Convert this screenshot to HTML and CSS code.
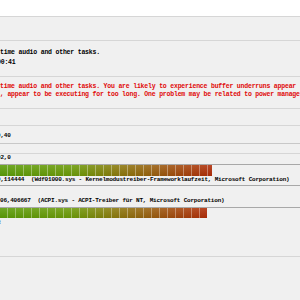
FILE: index.html
```html
<!DOCTYPE html>
<html>
<head>
<meta charset="utf-8">
<link rel="stylesheet" href="styles.css">
</head>
<body>
<div class="page">
  <div class="top"></div>
  <div class="band"></div>
  <div class="info">
    <div class="txt">time audio and other tasks.</div>
    <div class="txt shift">00:41</div>
  </div>
  <div class="warn">
    <div class="red">time audio and other tasks. You are likely to experience buffer underruns appear</div>
    <div class="red">, appear to be executing for too long. One problem may be related to power manage</div>
  </div>
  <div class="gap"></div>
  <div class="row r1"><span class="val">9,40</span></div>
  <div class="row r2"></div>
  <div class="row r3"><span class="val">92,0</span></div>
  <div class="bar b1"></div>
  <div class="row r4"><span class="sm shift2">9,114444  (Wdf01000.sys - Kernelmodustreiber-Frameworklaufzeit, Microsoft Corporation)</span></div>
  <div class="row r5"><span class="sm">06,406667  (ACPI.sys - ACPI-Treiber für NT, Microsoft Corporation)</span></div>
  <div class="bar b2"></div>
  <div class="row r6"><span class="glyph">8</span></div>
  <div class="tail"></div>
</div>
</body>
</html>
```
FILE: styles.css
```css
html, body {
  margin: 0;
  padding: 0;
  background: #efefef;
}
.page {
  width: 300px;
  height: 300px;
  overflow: hidden;
  display: flex;
  flex-direction: column;
  font-family: "Liberation Mono", "DejaVu Sans Mono", monospace;
  font-weight: bold;
  color: #000;
  background: #f0f0f0;
}
.txt, .red, .val, .sm, .glyph {
  white-space: pre;
}
.top {
  height: 16px;
  flex: none;
  background: #ffffff;
  border-bottom: 1px solid #d6d6d6;
}
.band {
  height: 23px;
  flex: none;
  border-bottom: 1px solid #d6d6d6;
}
.info {
  height: 36px;
  flex: none;
  box-sizing: border-box;
  padding-top: 7px;
  border-bottom: 1px solid #d6d6d6;
}
.txt {
  font-size: 6.5px;
  letter-spacing: -0.2px;
  line-height: 10px;
}
.shift {
  margin-left: -3px;
}
.warn {
  height: 32px;
  flex: none;
  box-sizing: border-box;
  padding-top: 6px;
  border-bottom: 1px solid #d6d6d6;
}
.red {
  font-size: 6.5px;
  letter-spacing: -0.2px;
  line-height: 8px;
  color: #e00808;
}
.gap {
  height: 16px;
  flex: none;
  border-bottom: 1px solid #d6d6d6;
}
.row {
  flex: none;
  box-sizing: border-box;
  display: flex;
  align-items: flex-end;
  font-size: 6px;
  letter-spacing: -0.2px;
}
.r1 { height: 18px; padding-bottom: 3px; border-bottom: 1px solid #c8c8c8; }
.r2 { height: 10px; border-bottom: 1px solid #d6d6d6; }
.r3 { height: 11px; padding-bottom: 2px; border-bottom: 1px solid #a8a8a8; }
.r4 { height: 10px; padding-bottom: 1px; border-bottom: 1px solid #a8a8a8; }
.r5 { height: 22px; padding-bottom: 2px; border-bottom: 1px solid #a8a8a8; }
.r6 { height: 10px; padding-bottom: 1px; }
.val {
  margin-left: -3px;
  line-height: 8px;
}
.sm {
  line-height: 8px;
}
.shift2 {
  margin-left: -3px;
}
.glyph {
  margin-left: -3px;
  line-height: 8px;
}
.bar {
  flex: none;
  height: 11px;
  background:
    repeating-linear-gradient(90deg, transparent 0 7px, rgba(255,255,255,0.35) 7px 8px),
    linear-gradient(180deg, rgba(255,255,255,0.12), rgba(0,0,0,0.05)),
    linear-gradient(90deg, #5a9c08 0%, #6c9a08 35%, #8a7a0c 55%, #9a5a0e 75%, #b02c08 100%);
}
.b1 { width: 212px; }
.b2 { width: 207px; height: 10px; }
.tail {
  flex: none;
  height: 28px;
  border-bottom: 1px solid #d6d6d6;
}
```
